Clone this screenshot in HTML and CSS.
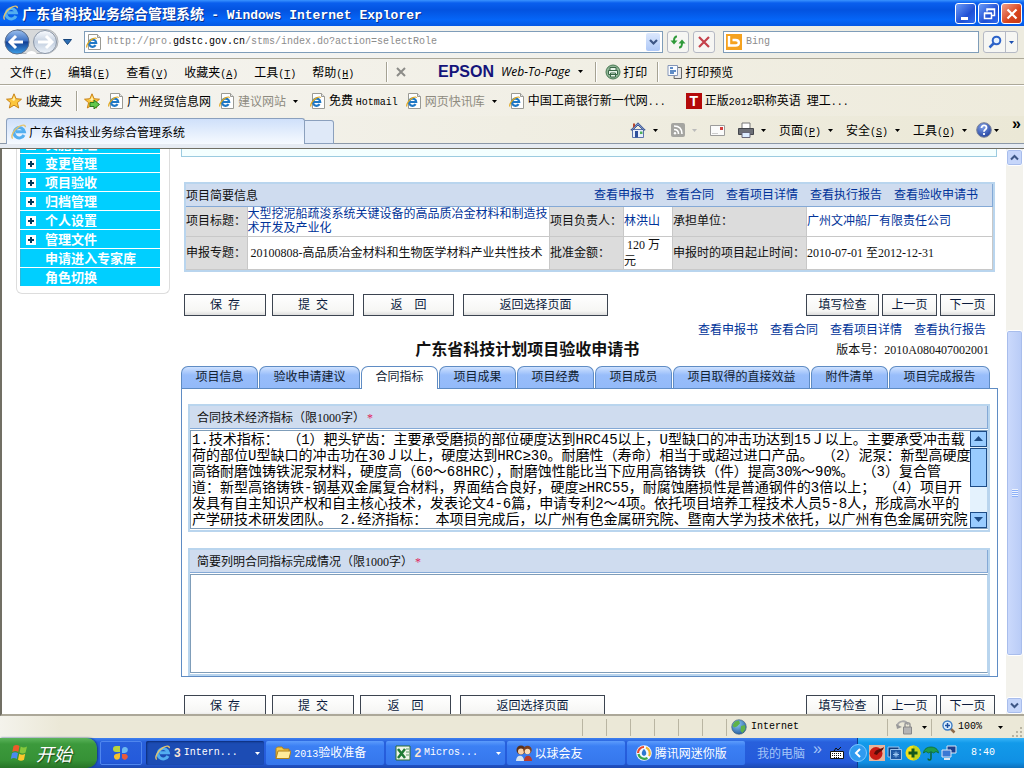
FILE: index.html
```html
<!DOCTYPE html>
<html lang="zh-CN">
<head>
<meta charset="utf-8">
<title>广东省科技业务综合管理系统</title>
<meta name="viewport" content="width=device-width, initial-scale=1.0">
<link rel="stylesheet" href="styles.css">
</head>
<body>

<!-- shared icons -->
<svg class="defs" width="0" height="0">
<defs>
<linearGradient id="gBack" x1="0" y1="0" x2="0" y2="1"><stop offset="0" stop-color="#9cc0ee"/><stop offset=".45" stop-color="#3d72c4"/><stop offset=".5" stop-color="#123f94"/><stop offset="1" stop-color="#3fa0e8"/></linearGradient>
<linearGradient id="gFwd" x1="0" y1="0" x2="0" y2="1"><stop offset="0" stop-color="#fafcff"/><stop offset=".5" stop-color="#c3cfdf"/><stop offset="1" stop-color="#eef4fb"/></linearGradient>
<radialGradient id="gHelp" cx=".4" cy=".3" r=".8"><stop offset="0" stop-color="#7fa0e8"/><stop offset="1" stop-color="#1b3a97"/></radialGradient>
<radialGradient id="gGlobe" cx=".4" cy=".3" r=".8"><stop offset="0" stop-color="#8cc8f4"/><stop offset="1" stop-color="#1b5499"/></radialGradient>
</defs>
<symbol id="e" viewBox="0 0 16 16">
<path d="M13 11A5.200 5.200 0 1 1 13.400 7.800H5" fill="none" stroke="#52aef0" stroke-width="3"/>
<path d="M1.600 14.600C-.6 12 3 5.600 8 2.600c3.400-2 6.600-2 6.300.6" fill="none" stroke="#e6c46c" stroke-width="1.400"/>
</symbol>
<symbol id="page" viewBox="0 0 16 16">
<path d="M2.500.5h9l3 3v12h-12z" fill="#fff" stroke="#9a9a94"/>
<path d="M11.500.5v3h3" fill="#e4e4e4" stroke="#9a9a94"/>
<path d="M9.600 11.200A3.600 3.600 0 1 1 10.200 9H3.600" fill="none" stroke="#1f78c6" stroke-width="2.200"/>
<path d="M.8 13.500C.2 11 3 6.500 7 4.600c2-.9 3.500-.8 3.600.2" fill="none" stroke="#e0a820" stroke-width="1.200"/>
</symbol>
<symbol id="star" viewBox="0 0 16 16"><path d="M8 .8l2.100 4.900 5.400.5-4.100 3.500 1.300 5.300L8 12.200 3.300 15l1.300-5.300L.5 6.200l5.400-.5z" fill="#fcc63c" stroke="#c47a0c" stroke-width=".9"/><path d="M8 3l1.300 3.400L8 8 5 6.600l1.800-.3z" fill="#fff0b0"/></symbol>
<symbol id="down" viewBox="0 0 5 3"><path d="M0 0h5L2.500 3z" fill="currentColor"/></symbol>
</svg>

<div class="window">

<header class="titlebar">
<svg class="i16"><use href="#e"/></svg>
<h1>广东省科技业务综合管理系统 <span>- Windows Internet Explorer</span></h1>
<div class="winbtns">
<button aria-label="最小化"><svg width="18" height="18" viewBox="0 0 18 18"><path d="M4 12h7v3H4z" fill="#fff"/></svg></button>
<button aria-label="还原"><svg width="18" height="18" viewBox="0 0 18 18"><path d="M7 6.500V4h7.500v6.500H12M6.500 4.500h8M4.500 8.500h7v5h-7zM4 8h8" fill="none" stroke="#fff" stroke-width="1.500"/></svg></button>
<button class="close" aria-label="关闭"><svg width="18" height="18" viewBox="0 0 18 18"><path d="M4.500 4.500l9 9M13.500 4.500l-9 9" stroke="#fff" stroke-width="2.200"/></svg></button>
</div>
</header>

<div class="navbar">
<button class="travel" aria-label="后退 前进">
<svg width="55" height="28" viewBox="0 0 55 28">
<path d="M13 1.500h29a12 12 0 0 1 0 24H13z" fill="#d7d9da" stroke="#b0b4b8"/>
<path d="M22 26c3-4 8-4 11 0z" fill="#fff"/>
<circle cx="13" cy="14" r="12" fill="url(#gBack)" stroke="#5c6f8c"/>
<circle cx="41" cy="14" r="11.500" fill="url(#gFwd)" stroke="#8b97a8"/>
<path d="M6 14h13M12 8l-6 6 6 6" fill="none" stroke="#fff" stroke-width="3"/>
<path d="M34 14h13M42 8l6 6-6 6" fill="none" stroke="#fff" stroke-width="3"/>
</svg>
</button>
<button class="plain hist" aria-label="历史"><svg width="9" height="6" viewBox="0 0 9 6"><path d="M.5.5h8l-4 5z" fill="#2c6eb4" stroke="#17457c"/></svg></button>
<div class="address">
<svg class="i16"><use href="#page"/></svg>
<div class="url" role="textbox" aria-label="地址">http://pro.<b>gdstc.gov.cn</b>/stms/index.do?action=selectRole</div>
<button class="drop" aria-label="展开地址"><svg width="9" height="7" viewBox="0 0 9 7"><path d="M1 1l3.500 3.500L8 1" fill="none" stroke="#3d5685" stroke-width="2.200"/></svg></button>
</div>
<button class="sq" aria-label="刷新"><svg width="16" height="16" viewBox="0 0 16 16"><path d="M7 2.500C4.500 2.500 4 4 4 7M9 13.500c2.500 0 3-1.500 3-4.500" fill="none" stroke="#2f9a3a" stroke-width="2"/><path d="M.5 6.500h7L4 10.500zM8.500 9.500h7L12 5.500z" fill="#2f9a3a"/></svg></button>
<button class="sq" aria-label="停止"><svg width="14" height="14" viewBox="0 0 14 14"><path d="M2 2l10 10M12 2L2 12" stroke="#c4414b" stroke-width="2.200"/></svg></button>
<div class="search">
<svg width="16" height="16" viewBox="0 0 16 16"><path d="M0 0h16v16H0z" fill="#f5a21f"/><path d="M3 2v9.500h6.500c4.500 0 4.500-5.500 0-5.500H6.500" fill="none" stroke="#fff" stroke-width="2.400"/></svg>
<input type="text" placeholder="Bing" aria-label="搜索">
</div>
<div class="go">
<button aria-label="搜索"><svg width="14" height="14" viewBox="0 0 14 14"><circle cx="8.500" cy="5.500" r="3.800" fill="#e6f2ff" stroke="#2d63c8" stroke-width="2"/><path d="M5.500 8.500L1.500 12.500" stroke="#2d63c8" stroke-width="2.500"/></svg></button>
<button class="opt" aria-label="搜索选项"><svg class="arr"><use href="#down"/></svg></button>
</div>
</div>

<div class="menubar">
<nav class="menus">
<button>文件<i>(<u>F</u>)</i></button>
<button>编辑<i>(<u>E</u>)</i></button>
<button>查看<i>(<u>V</u>)</i></button>
<button>收藏夹<i>(<u>A</u>)</i></button>
<button>工具<i>(<u>T</u>)</i></button>
<button>帮助<i>(<u>H</u>)</i></button>
</nav>
<span class="sep"></span>
<button class="plain xbar" aria-label="关闭工具栏"><svg width="10" height="10" viewBox="0 0 10 10"><path d="M1 1l8 8M9 1L1 9" stroke="#8c8c88" stroke-width="2"/></svg></button>
<b class="epson">EPSON</b>
<button class="plain wtp">Web-To-Page<svg class="arr"><use href="#down"/></svg></button>
<span class="sep"></span>
<button class="plain tool"><svg width="16" height="16" viewBox="0 0 16 16"><circle cx="8" cy="8" r="7" fill="#8fb596" stroke="#4a7a54"/><path d="M5 6V3.500h6V6M3.500 6.500h9v4h-9zM5.500 9h5v4h-5z" fill="#e8f4ea" stroke="#3a6646"/></svg>打印</button>
<span class="sep"></span>
<button class="plain tool"><svg width="16" height="16" viewBox="0 0 16 16"><path d="M8 3.500h6.500v11H7z" fill="#e8e8e8" stroke="#666"/><path d="M1 1.500h9.500v10H1z" fill="#f8fbff" stroke="#8596b8"/><path d="M3 4h3M3 7h6M3 9h4" stroke="#2d68b4" stroke-width="1.500"/></svg>打印预览</button>
</div>

<nav class="favbar">
<a href="#"><svg class="i16"><use href="#star"/></svg>收藏夹</a>
<span class="sep"></span>
<a href="#" aria-label="添加到收藏夹栏"><svg class="i16" viewBox="0 0 16 16"><use href="#star"/><path d="M6 9.500h4V7l5.500 4.500L10 16v-2.500H6z" fill="#62c84c" stroke="#2c7a1e"/></svg></a>
<a href="#"><svg class="i16"><use href="#page"/></svg>广州经贸信息网</a>
<a href="#" class="dim"><svg class="i16"><use href="#page"/></svg>建议网站<svg class="arr"><use href="#down"/></svg></a>
<a href="#"><svg class="i16"><use href="#page"/></svg><span>免费 <span class="mono">Hotmail</span></span></a>
<a href="#" class="dim"><svg class="i16"><use href="#page"/></svg>网页快讯库<svg class="arr"><use href="#down"/></svg></a>
<a href="#"><svg class="i16"><use href="#page"/></svg><span>中国工商银行新一代网<span class="mono">...</span></span></a>
<a href="#" class="last"><span class="tlogo">T</span><span>正版<span class="mono">2012</span>职称英语&ensp;理工<span class="mono">...</span></span></a>
</nav>

<div class="tabrow">
<button class="pagetab"><svg class="i16"><use href="#e"/></svg>广东省科技业务综合管理系统</button>
<button class="newtab" aria-label="新选项卡"></button>
<div class="cmds">
<button aria-label="主页"><svg width="16" height="16" viewBox="0 0 16 16"><path d="M2.500 7.500h11v8h-11z" fill="#e9eefb" stroke="#5c74ac"/><path d="M8 .8L.8 8h2L8 3l5.200 5h2z" fill="#7f9ad4" stroke="#3c558e"/><path d="M5 9h3v6.500H5z" fill="#2f4f9c"/><path d="M10 9.500h2.500V12H10z" fill="#4fae5c"/><path d="M3 1.500h2V4L3 6z" fill="#b8472f"/></svg><svg class="arr"><use href="#down"/></svg></button>
<button class="off" aria-label="源"><svg width="14" height="14" viewBox="0 0 14 14"><rect width="14" height="14" rx="2" fill="#a5a5a1"/><path d="M3 3c5 0 8 3 8 8M3 6.500c3 0 4.500 1.500 4.500 4.500" fill="none" stroke="#fff" stroke-width="1.600"/><circle cx="4" cy="10.300" r="1.200" fill="#fff"/></svg><svg class="arr"><use href="#down"/></svg></button>
<button aria-label="阅读邮件"><svg width="15" height="11" viewBox="0 0 15 11"><path d="M.5.5h14v10H.5z" fill="#fbfbfb" stroke="#9b9b9b"/><path d="M10 2h3v3h-3z" fill="#d43f3f"/><path d="M2 8.500h6" stroke="#ccc"/></svg></button>
<button aria-label="打印"><svg width="16" height="16" viewBox="0 0 16 16"><path d="M4 1h8v6H4z" fill="#fff" stroke="#777"/><path d="M.5 6.500h15v6H.5z" fill="#6c6f76" stroke="#44464c"/><path d="M4 10.500h8v5H4z" fill="#dcecff" stroke="#667"/></svg><svg class="arr"><use href="#down"/></svg></button>
<button><span>页面<i>(<u>P</u>)</i></span><svg class="arr"><use href="#down"/></svg></button>
<button><span>安全<i>(<u>S</u>)</i></span><svg class="arr"><use href="#down"/></svg></button>
<button><span>工具<i>(<u>O</u>)</i></span><svg class="arr"><use href="#down"/></svg></button>
<button class="help" aria-label="帮助"><svg width="16" height="16" viewBox="0 0 16 16"><circle cx="8" cy="8" r="7.300" fill="url(#gHelp)" stroke="#7d8599"/><path d="M5.500 6c0-3.500 5-3.200 5-.3C10.500 7.600 8 7.500 8 9.800M8 11v2" fill="none" stroke="#fff" stroke-width="1.800"/></svg><svg class="arr"><use href="#down"/></svg></button>
<span class="more">»</span>
</div>
</div>

<div class="view">
<div class="doc">
<aside class="side">
<ul>
<li><a href="#"><span class="plus"></span>实施管理</a></li>
<li><a href="#"><span class="plus"></span>变更管理</a></li>
<li><a href="#"><span class="plus"></span>项目验收</a></li>
<li><a href="#"><span class="plus"></span>归档管理</a></li>
<li><a href="#"><span class="plus"></span>个人设置</a></li>
<li><a href="#"><span class="plus"></span>管理文件</a></li>
<li><a href="#">申请进入专家库</a></li>
<li><a href="#">角色切换</a></li>
</ul>
</aside>

<main>
<div class="prev"></div>

<section class="brief">
<div class="briefhead">
<h2>项目简要信息</h2>
<nav class="links">
<a href="#">查看申报书</a>
<a href="#">查看合同</a>
<a href="#">查看项目详情</a>
<a href="#">查看执行报告</a>
<a href="#">查看验收申请书</a>
</nav>
</div>
<table>
<colgroup><col class="c1"><col><col class="c3"><col class="c4"><col class="c5"><col class="c6"></colgroup>
<tr>
<th>项目标题：</th><td><a href="#">大型挖泥船疏浚系统关键设备的高品质冶金材料和制造技术开发及产业化</a></td>
<th>项目负责人：</th><td><a href="#">林洪山</a></td>
<th>承担单位：</th><td><a href="#">广州文冲船厂有限责任公司</a></td>
</tr>
<tr>
<th>申报专题：</th><td>&nbsp;20100808-高品质冶金材料和生物医学材料产业共性技术</td>
<th>批准金额：</th><td class="money">&nbsp;120 万元</td>
<th>申报时的项目起止时间：</th><td>2010-07-01 至2012-12-31</td>
</tr>
</table>
</section>

<div class="actions">
<button class="w82">保&ensp;存</button>
<button class="w82">提&ensp;交</button>
<button class="w91 wide">返&emsp;回</button>
<button class="w145 wide">返回选择页面</button>
<div class="pager">
<button class="w73">填写检查</button>
<button class="w55">上一页</button>
<button class="w55">下一页</button>
</div>
</div>

<nav class="links second">
<a href="#">查看申报书</a>
<a href="#">查看合同</a>
<a href="#">查看项目详情</a>
<a href="#">查看执行报告</a>
</nav>

<div class="heading">
<h2>广东省科技计划项目验收申请书</h2>
<p>版本号：2010A080407002001</p>
</div>

<nav class="tabs">
<a href="#">项目信息</a>
<a href="#" class="t6">验收申请建议</a>
<a href="#" class="on">合同指标</a>
<a href="#">项目成果</a>
<a href="#">项目经费</a>
<a href="#">项目成员</a>
<a href="#" class="t9">项目取得的直接效益</a>
<a href="#">附件清单</a>
<a href="#" class="t6">项目完成报告</a>
</nav>

<form class="panel">
<div class="box">
<label for="target">合同技术经济指标（限1000字）<em>*</em></label>
<div class="field">
<textarea id="target" rows="6">1.技术指标： （1）耙头铲齿：主要承受磨损的部位硬度达到HRC45以上，U型缺口的冲击功达到15Ｊ以上。主要承受冲击载
荷的部位U型缺口的冲击功在30Ｊ以上，硬度达到HRC≥30。耐磨性（寿命）相当于或超过进口产品。 （2）泥泵：新型高硬度
高铬耐磨蚀铸铁泥泵材料，硬度高（60～68HRC），耐磨蚀性能比当下应用高铬铸铁（件）提高30%～90%。 （3）复合管
道：新型高铬铸铁-钢基双金属复合材料，界面结合良好，硬度≥HRC55，耐腐蚀磨损性是普通钢件的3倍以上； （4）项目开
发具有自主知识产权和自主核心技术，发表论文4-6篇，申请专利2～4项。依托项目培养工程技术人员5-8人，形成高水平的
产学研技术研发团队。 2.经济指标： 本项目完成后，以广州有色金属研究院、暨南大学为技术依托，以广州有色金属研究院</textarea>
<div class="tscroll"><span class="tb"><svg width="9" height="5"><path d="M0 5h9L4.500 0z" fill="#1d4c86"/></svg></span><span class="tt"></span><span class="tb end"><svg width="9" height="5"><path d="M0 0h9L4.500 5z" fill="#1d4c86"/></svg></span></div>
</div>
</div>
<div class="box">
<label for="done">简要列明合同指标完成情况（限1000字）<em>*</em></label>
<div class="field"><textarea id="done" rows="6"></textarea></div>
</div>
</form>

<div class="actions bottom">
<button class="w82">保&ensp;存</button>
<button class="w82">提&ensp;交</button>
<button class="w91">返&emsp;回</button>
<button class="w145 wide">返回选择页面</button>
<div class="pager">
<button class="w73">填写检查</button>
<button class="w55">上一页</button>
<button class="w55">下一页</button>
</div>
</div>
</main>
</div>

<div class="scroll">
<span class="sbtn"><svg width="9" height="7" viewBox="0 0 9 7"><path d="M1 5.500L4.500 2 8 5.500" fill="none" stroke="#3d5685" stroke-width="2"/></svg></span>
<span class="track"></span>
<span class="thumb"></span>
<span class="gap"></span>
<span class="sbtn"><svg width="9" height="7" viewBox="0 0 9 7"><path d="M1 1.500L4.500 5 8 1.500" fill="none" stroke="#3d5685" stroke-width="2"/></svg></span>
</div>
</div>

<footer class="status">
<div class="cells"><span></span><span></span><span></span><span></span><span></span><span></span></div>
<div class="zone"><svg width="16" height="16" viewBox="0 0 16 16"><circle cx="8" cy="8" r="7.300" fill="url(#gGlobe)" stroke="#3d5c74" stroke-width=".6"/><path d="M4 2.500l4-1 1 3-3 3-3 1-1.500-2zM10 7l4-1 .5 4-3 4-2-2z" fill="#5fb348"/></svg><span class="mono">Internet</span></div>
<div class="lock"><svg width="18" height="16" viewBox="0 0 18 16"><path d="M1 7c2-6 9-6 11-1" fill="none" stroke="#aaa" stroke-width="2"/><path d="M0 5l6 3-5 2z" fill="#999"/><path d="M9 8V5.500c0-2.500 5-2.500 5 0V8" fill="none" stroke="#999" stroke-width="1.500"/><path d="M7.500 8h8v7h-8z" fill="#b4b4b4" stroke="#888"/></svg><svg class="arr"><use href="#down"/></svg></div>
<div class="zoom"><svg width="14" height="14" viewBox="0 0 14 14"><path d="M8.500 8.500l4 4" stroke="#8c6a4a" stroke-width="2.500"/><circle cx="5.500" cy="5.500" r="4.500" fill="#dff0ff" stroke="#3d7cc4" stroke-width="1.400"/><path d="M3 5.500h5M5.500 3v5" stroke="#1d50a0" stroke-width="1.500"/></svg><span class="mono">100%</span><svg class="arr"><use href="#down"/></svg></div>
<svg class="grip" width="12" height="12" viewBox="0 0 12 12"><path d="M9 1h2v2H9zM5 5h2v2H5zM9 5h2v2H9zM1 9h2v2H1zM5 9h2v2H5zM9 9h2v2H9z" fill="#b8b4a2"/></svg>
</footer>

<footer class="taskbar">
<button class="start"><svg width="20" height="18" viewBox="0 0 20 18"><path d="M3.500 2c2-1.200 4-1.200 6 0L8.300 8c-2-1.200-4-1.200-6 0z" fill="#ee5a2a"/><path d="M10.700 2.500c2 1.200 4 1.200 6.300 0L15.600 8.500c-2 1.200-4 1.200-6 0z" fill="#86c83c"/><path d="M2 9.200c2-1.200 4-1.200 6 0L6.800 15c-2-1.200-4-1.200-6 0z" fill="#4a8af0"/><path d="M9.200 9.800c2 1.200 4 1.200 6 0L14 15.800c-2 1.200-4 1.200-6 0z" fill="#fcc82c"/></svg>开始</button>
<button class="quick" aria-label="快速启动"><svg width="18" height="18" viewBox="0 0 18 18"><path d="M8 2H4a3 3 0 0 0 0 6h4z" fill="#b8d43c"/><path d="M10 9V5a3 3 0 1 1 3 4z" fill="#6cb8f0"/><path d="M8 9v4a3 3 0 1 1-4-3z" fill="#f4c02c"/><path d="M10 10h4a3 3 0 1 1-4 4z" fill="#e85a3c"/></svg></button>
<div class="tasks">
<button class="active"><svg class="i16"><use href="#e"/></svg><b>3</b><span class="mono">Intern...</span><svg class="arr"><use href="#down"/></svg></button>
<button><svg class="i16" viewBox="0 0 16 16"><path d="M1 3.500L2.500 2H7l1.500 2H14v9.500H1z" fill="#f4c848" stroke="#b08018"/><path d="M1 13.500L3 6h13l-2 7.500z" fill="#ffeb9a" stroke="#b08018"/></svg><span><span class="mono">2013</span>验收准备</span></button>
<button><svg class="i16" viewBox="0 0 16 16"><path d="M1 1h14v14H1z" fill="#eef6ea" stroke="#2c6c34"/><path d="M3 4l7 9M10 4l-7 9" stroke="#1f7a34" stroke-width="2.500"/><path d="M11 4h3M11 7h3M11 10h3" stroke="#5a9a64"/></svg><b>2</b><span class="mono">Micros...</span><svg class="arr"><use href="#down"/></svg></button>
<button><svg class="i16" viewBox="0 0 16 16"><circle cx="5" cy="5" r="4.500" fill="#5a3018"/><circle cx="5" cy="6.500" r="3" fill="#f8d0a8"/><circle cx="11.500" cy="5" r="4.200" fill="#7a4020"/><circle cx="11.500" cy="6.500" r="2.800" fill="#fadcb8"/><path d="M0 16c0-7 8-7 8 0z" fill="#d8e4f0"/><path d="M8 16c0-7 8-7 8 0z" fill="#b83a2c"/></svg>以球会友</button>
<button><svg class="i16" viewBox="0 0 16 16"><circle cx="8" cy="8" r="7.800" fill="#f4f8ff"/><path d="M8 2a6 6 0 0 0-6 6" fill="none" stroke="#e8482c" stroke-width="2.200"/><path d="M2.500 9a6 6 0 0 0 9 4" fill="none" stroke="#3aa84c" stroke-width="2.200"/><path d="M13 11a6 6 0 0 0-3-8.500" fill="none" stroke="#f4b82c" stroke-width="2.200"/><path d="M8 4c3 3 3 6 0 7-3-1-3-4 0-7z" fill="#2c78d0"/></svg>腾讯网迷你版</button>
</div>
<div class="desk">我的电脑<span class="more">»</span><svg width="14" height="12" viewBox="0 0 14 12"><path d="M.5 4.500h13v7H.5z" fill="#fff" stroke="#111"/><path d="M2 6.500h10M2 8.500h10M4 10.500h6" stroke="#111" stroke-dasharray="1 1"/><path d="M4 4l2-3 2 2 3-3" fill="none" stroke="#111"/></svg></div>
<div class="tray">
<svg class="chev" width="18" height="18" viewBox="0 0 18 18"><circle cx="9" cy="9" r="8.500" fill="#2f9bf0" stroke="#7cc8ff"/><path d="M11 5L7 9l4 4" fill="none" stroke="#fff" stroke-width="2"/></svg>
<svg class="i16" viewBox="0 0 16 16"><path d="M0 0h16v16H0z" fill="#e8b49a"/><circle cx="7" cy="8.500" r="6.500" fill="#c81c14"/><path d="M5 9c2-6 6-4 10-7-1 5-5 4-7 8z" fill="#5a0c08"/></svg>
<svg class="i16" viewBox="0 0 16 16"><path d="M1 2h11v10H1z" fill="#123e7c" stroke="#9cc4ec"/><path d="M3.500 4.500h11v10h-11z" fill="#1d58a4" stroke="#9cc4ec"/><path d="M6 9.500h6M9 6.500v6M7 7.500l4 4M11 7.500l-4 4" stroke="#9cc8f4"/></svg>
<svg class="i16" viewBox="0 0 16 16"><circle cx="8" cy="8" r="7.500" fill="#f4e01c"/><path d="M8 .5a7.500 7.500 0 0 1 0 15z" fill="#c4d41c"/><path d="M3.500 8h9M8 3.500v9" stroke="#14581c" stroke-width="3"/></svg>
<svg class="i16" viewBox="0 0 16 16"><path d="M.5 8C1 0 15 0 15.500 8L13 6.500 10.500 8 8 6.500 5.500 8 3 6.500z" fill="#1f9c4c" stroke="#0c6428" stroke-width=".7"/><path d="M8 7v6.500c0 2-3 2-3 0" fill="none" stroke="#0c6428" stroke-width="1.400"/></svg>
<svg class="i16" viewBox="0 0 16 16"><path d="M6 1h9v7H6z" fill="#1a3f90" stroke="#dce6f4"/><path d="M1 5h9v7H1z" fill="#3a78d4" stroke="#dce6f4"/><path d="M3 14h6" stroke="#dce6f4" stroke-width="2"/></svg>
<time class="mono">8:40</time>
</div>
</footer>
</div>
</body>
</html>
```
FILE: styles.css
```css
*{box-sizing:border-box;}
body{
margin:0;
font:12px/16px "Liberation Serif","Noto Sans CJK SC",sans-serif;
color:#111;
background:#fff;
overflow:hidden;
}
.window{display:flex;flex-direction:column;height:100vh;background:#ece9d8;}
.defs{position:absolute;}
button{font:inherit;color:inherit;padding:0;margin:0;border:0;background:none;white-space:nowrap;}
a{text-decoration:none;color:#003399;}
h1,h2,p,ul{margin:0;padding:0;}
i{font:10px "Liberation Mono",monospace;}
svg{display:block;flex:none;}
.mono{font-family:"Liberation Mono",monospace;font-size:10px;}
.i16{width:16px;height:16px;}
.arr{width:5px;height:3px;}
.sep{width:2px;height:20px;border-left:1px solid #a5a293;border-right:1px solid #fff;}

/* title bar */
.titlebar{
display:flex;
align-items:center;
flex:0 0 26px;
padding:0 2px 0 3px;
color:#fff;
background:linear-gradient(#3a93ff 0,#0a5fee 3px,#0353e0 10px,#0566f8 20px,#0458e4 100%);
}
.titlebar h1{flex:1;margin-left:3px;font:bold 14px/20px "Noto Sans CJK SC",sans-serif;text-shadow:1px 1px 0 #0a2f8a;}
.titlebar h1 span{margin-left:4px;font:bold 13px "Liberation Mono",monospace;}
.winbtns{display:flex;gap:2px;}
.winbtns button{width:21px;height:21px;padding:1px;border:1px solid #fff;border-radius:3px;background:linear-gradient(135deg,#6c9cf8,#1f4fd4 60%,#2f6cf0);}
.winbtns .close{background:linear-gradient(135deg,#f0a08c,#d8431c 60%,#c43a18);}

/* address row */
.navbar{display:flex;align-items:center;flex:0 0 33px;padding:0 6px 0 4px;background:linear-gradient(90deg,#f6f7f8,#edebdf);border-bottom:1px solid #aca899;}
.hist{margin:0 12px 0 4px;}
.address{display:flex;align-items:center;flex:1;height:22px;padding:0 2px 0 1px;background:#fff;border:1px solid #7f9db9;}
.url{flex:1;margin-left:5px;font:10px/16px "Liberation Mono",monospace;color:#8c8c8c;}
.url b{font-weight:normal;color:#000;}
.drop{display:flex;align-items:center;justify-content:center;width:14px;height:18px;background:linear-gradient(#dce8fd,#aec8f7);border-radius:2px;}
.sq{display:flex;align-items:center;justify-content:center;width:22px;height:22px;margin-left:4px;background:#f6f6f3;border:1px solid #b5b9c4;border-radius:3px;}
.search{display:flex;align-items:center;flex:0 0 256px;height:22px;margin-left:8px;padding-left:2px;background:#fff;border:1px solid #7f9db9;}
.search input{flex:1;min-width:0;margin:0;padding:0 4px;border:0;outline:0;background:none;font:10px/16px "Liberation Mono",monospace;}
.search input::placeholder{color:#8c8c8c;}
.go{display:flex;flex:0 0 35px;height:22px;margin-left:4px;background:#f6f6f3;border:1px solid #b5b9c4;border-radius:3px;}
.go button{display:flex;align-items:center;justify-content:center;flex:1;color:#1c4fb0;}
.go .opt{flex:0 0 12px;border-left:1px solid #b5b9c4;}

/* menus */
.menubar,.favbar,.tabrow{font-family:"Noto Sans CJK SC",sans-serif;color:#000;}
.menubar{display:flex;align-items:center;flex:0 0 26px;padding-left:10px;background:linear-gradient(90deg,#f5f4f0,#eeebdc);border-bottom:1px solid #aca899;}
.menus{display:flex;gap:16px;width:376px;}
.xbar{margin:0 32px 0 8px;}
.epson{font:bold 16px/16px "Liberation Sans",sans-serif;color:#14147a;width:63px;}
.wtp{display:flex;align-items:center;gap:8px;margin-right:12px;font:italic 12px/16px "Open Sans","Liberation Sans",sans-serif;}
.tool{display:flex;align-items:center;gap:2px;margin:0 10px 0 8px;}
.favbar{display:flex;align-items:center;flex:0 0 31px;gap:8px;padding-left:6px;border-top:1px solid #fff;background:linear-gradient(90deg,#f5f4f0,#eeebdc);}
.favbar a{display:flex;align-items:center;gap:4px;color:#000;white-space:nowrap;}
.favbar a:nth-of-type(n+3){gap:3px;}
.favbar .sep{margin:0 -2px 0 6px;}
.favbar .dim{color:#8e8b80;}
.favbar .arr{color:#000;margin:0 4px;}
.favbar .last{margin-left:12px;}
.tlogo{width:16px;height:16px;background:#b40a0a;color:#fff;text-align:center;font:bold 14px/16px "Liberation Sans",sans-serif;}

/* page tab and command bar */
.tabrow{display:flex;align-items:flex-end;flex:0 0 32px;padding-left:6px;background:linear-gradient(90deg,#f5f4f0,#ebe8d6);border-bottom:4px solid #e6ebf2;box-shadow:inset 0 -1px #8b98a8;}
.pagetab{display:flex;align-items:center;gap:2px;width:299px;height:26px;padding-left:4px;background:linear-gradient(#cfe0fa,#f6faff);border:1px solid #8ba0bd;border-bottom:0;border-radius:3px 3px 0 0;}
.newtab{width:29px;height:24px;background:#dfe9f8;border:1px solid #8ba0bd;border-left:0;border-radius:0 3px 0 0;}
.cmds{display:flex;align-items:center;gap:13px;margin-left:auto;height:28px;padding-right:3px;}
.cmds button{display:flex;align-items:center;gap:7px;}
.cmds .off .arr{color:#bbb;}
.cmds .help{gap:2px;margin-left:-4px;}
.cmds .more{align-self:flex-start;font:bold 16px/16px "Liberation Sans",sans-serif;}

/* page */
.view{display:flex;flex:1;min-height:0;border:solid #716f64;border-width:1px 0 0 2px;border-bottom:2px solid #aca899;background:#fff;}
.doc{display:flex;align-items:flex-start;flex:1;min-width:0;overflow:hidden;}
.side{flex:0 0 154px;margin:-14px 0 0 14px;padding:0 9px 6px 3px;border:1px solid #ddd;border-top:0;border-radius:0 0 6px 6px;font-family:"Noto Sans CJK SC",sans-serif;}
.side ul{list-style:none;}
.side a{display:flex;align-items:center;height:18px;margin-bottom:1px;padding-left:24px;position:relative;background:#00cfff;border-left:1px solid #2ab8dc;color:#fff;font-weight:bold;font-size:13px;}
.plus{position:absolute;left:5px;top:5px;width:10px;height:10px;background:linear-gradient(#063b5a,#063b5a) 2px 4px/6px 2px no-repeat,linear-gradient(#063b5a,#063b5a) 4px 2px/2px 6px no-repeat,#fff;}

main{flex:1;min-width:0;margin:0 8px 0 11px;}
.prev{height:8px;margin-right:1px;background:#f4ffff;border:1px solid #9ccbe0;border-top:0;}
.brief{margin:25px 3px 0 3px;border:2px solid #b9d5ee;}
.briefhead{display:flex;align-items:center;height:23px;padding:0 14px 0 0;background:#cfdcef;border-bottom:1px solid #84a9d6;border-right:1px solid #84a9d6;}
.briefhead h2{flex:1;font:12px/16px "Noto Sans CJK SC",sans-serif;}
.links{display:flex;gap:12px;}
.brief table{width:100%;table-layout:fixed;border-collapse:collapse;line-height:14px;}
.brief tr{height:29px;}
.brief tr+tr{height:33px;line-height:16px;}
.brief th{font-weight:normal;text-align:left;background:#dcdcdc;white-space:nowrap;}
.brief th,.brief td{padding:0;border-right:1px solid #c8c8c8;border-bottom:1px solid #c8c8c8;}
.brief .money{padding-right:8px;}
.c1{width:61px;}
.c3{width:74px;}
.c4{width:49px;}
.c5{width:134px;}
.c6{width:186px;}

.actions{display:flex;gap:6px;margin:22px 3px 0 3px;}
.actions.bottom{margin-top:18px;}
.actions button{height:22px;border:1px solid #3c4450;background:linear-gradient(#fff,#f6f6f4 80%,#dedede);color:#0a1a3c;line-height:18px;}
.actions .w82{width:82px;}
.actions .w91{width:91px;}
.actions .w145{width:145px;}
.actions .w73{width:73px;}
.actions .w55{width:55px;}
.actions .wide{margin-left:3px;}
.pager{display:flex;gap:3px;margin-left:auto;}

.second{justify-content:flex-end;margin:6px 12px 0 0;}
.heading{display:grid;grid-template-columns:29% auto 1fr;align-items:center;height:24px;padding-right:9px;}
.heading h2{grid-column:2;align-self:start;font:bold 16px/20px "Noto Sans CJK SC",sans-serif;}
.heading p{text-align:right;}

.tabs{display:flex;gap:1px;margin-top:4px;padding-right:7px;}
.tabs a{flex:0 0 77px;height:22px;line-height:20px;text-align:center;color:#123;background:linear-gradient(#cfe2ff,#98bdfa 8px,#93baf9);border:1px solid #5f8cc4;border-bottom:0;border-radius:7px 7px 0 0;}
.tabs .t6{flex-basis:101px;}
.tabs .t9{flex-basis:137px;}
.tabs .on{background:#fff;margin-bottom:-1px;height:23px;}

.panel{border:1px solid #5f8cc4;padding:15px 7px 0 6px;}
.box{border:2px solid #b9d5ee;padding-bottom:1px;margin-bottom:16px;}
.box:last-child{margin-bottom:0;}
.box label{display:block;height:23px;padding:2px 0 0 7px;line-height:20px;background:#cfdcef;border-bottom:1px solid #84a9d6;border-right:1px solid #84a9d6;}
.box em{color:#e0245c;font-style:normal;margin-left:2px;}
.field{display:flex;margin-top:1px;border:1px solid #7f9db9;border-right-color:#b9d5ee;}
.field textarea{display:block;flex:1;min-width:0;height:97px;margin:0;padding:1px 0 0 1px;border:0;outline:0;resize:none;overflow:hidden;white-space:pre;font:14px/16px "Liberation Mono","Noto Sans CJK SC",monospace;color:#000;}
.tscroll{display:flex;flex-direction:column;width:17px;background:#e4f2fd;}
.tb,.tt{border:1px solid #1d4c86;background:#99ccff;}
.tb{display:flex;align-items:center;justify-content:center;height:16px;}
.tt{height:39px;margin-top:1px;}
.tb.end{margin-top:auto;}

/* window scrollbar */
.scroll{display:flex;flex-direction:column;flex:0 0 17px;margin-right:1px;background:#f3f2ec;}
.sbtn{display:flex;align-items:center;justify-content:center;flex:0 0 17px;background:#c6d6fa;border:1px solid #fff;border-radius:3px;box-shadow:inset 0 0 0 1px #a8bdec;}
.track{flex:165;}
.thumb{flex:325;border:1px solid #fff;border-radius:3px;box-shadow:inset 0 0 0 1px #a8bdec;background:repeating-linear-gradient(#eef4fe 0 1px,#8cb0f8 1px 2px) center/6px 8px no-repeat,linear-gradient(90deg,#ccdafc,#b8cbf6);}
.gap{flex:41;}

/* status bar */
.status{display:flex;align-items:center;flex:0 0 22px;background:linear-gradient(90deg,#f4f3ec,#ebe8d7 60px);color:#000;}
.cells{display:flex;margin-left:auto;}
.cells span{width:24px;height:17px;border-left:1px solid #b9b5a2;}
.zone,.lock,.zoom{display:flex;align-items:center;height:17px;border-left:1px solid #b9b5a2;}
.zone{width:161px;padding-left:4px;gap:4px;}
.lock{width:44px;padding-left:8px;gap:8px;}
.zoom{width:76px;padding-left:10px;gap:2px;}
.zoom .arr{margin-left:14px;}
.grip{align-self:flex-end;margin:0 1px 0 4px;}

/* taskbar */
.taskbar{display:flex;align-items:stretch;flex:0 0 30px;color:#fff;font-family:"Noto Sans CJK SC",sans-serif;background:linear-gradient(#3c80f0 0,#2860dc 4px,#245adb 24px,#1c48b0 100%);}
.start{display:flex;align-items:center;gap:6px;width:97px;padding-left:10px;border-radius:0 10px 10px 0;background:linear-gradient(#5cb45c 0,#3c9a3c 6px,#369236 22px,#277427 100%);font-size:18px;font-style:italic;text-shadow:1px 1px 1px #1c4c1c;box-shadow:1px 0 2px #123a80;}
.quick{display:flex;align-items:center;justify-content:center;width:42px;margin:3px 4px 3px 3px;border:1px solid #4f86ee;border-radius:2px;}
.tasks{display:grid;grid-template-columns:repeat(5,1fr);gap:2px;flex:1;min-width:0;padding:3px 0;}
.tasks button{display:flex;align-items:center;gap:3px;padding:0 4px 0 9px;border-radius:2px;background:linear-gradient(#5c9cfc,#3c80f4 5px,#3576ec);}
.tasks .active{background:#1c4cb4;box-shadow:inset 1px 1px 2px #0c2c78;}
.tasks b{font:bold 12px/16px "Liberation Sans",sans-serif;color:#f8e4d4;}
.tasks .arr{margin-left:auto;}
.desk{display:flex;align-items:center;width:112px;padding-left:12px;color:#a4c4f8;}
.desk .more{flex:1;padding:0 0 8px 8px;font:16px/12px "Liberation Sans",sans-serif;}
.desk svg{margin-right:13px;}
.tray{display:flex;align-items:center;gap:2px;width:167px;padding-left:1px;background:linear-gradient(#38b4f8 0,#129aea 5px,#1090e4 24px,#0c70bc 100%);border-left:1px solid #0c3c90;}
.chev{margin-left:-10px;}
.tray time{margin-left:12px;}
```
